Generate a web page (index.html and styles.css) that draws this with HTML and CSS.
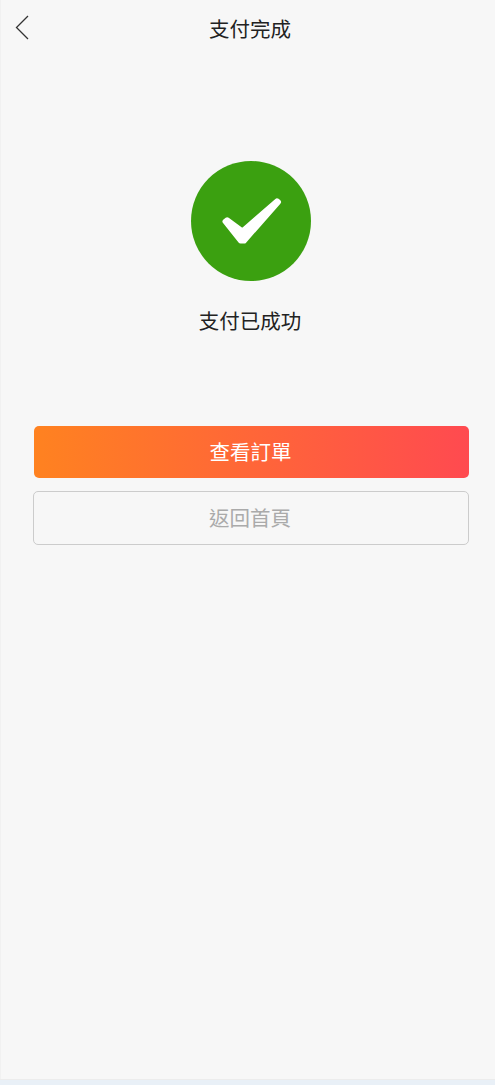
FILE: index.html
```html
<!DOCTYPE html>
<html lang="zh-Hant">
<head>
<meta charset="utf-8">
<title>支付完成</title>
<link rel="stylesheet" href="styles.css">
</head>
<body>
<main class="page">
  <header class="nav">
    <svg class="back" width="14" height="25" viewBox="0 0 14 25"><path d="M13 1 L1.5 12.5 L13 24" fill="none" stroke="#333" stroke-width="1.3"/></svg>
    <h1 class="title">支付完成</h1>
  </header>
  <section class="result">
    <svg class="tick" width="120" height="120" viewBox="0 0 120 120">
      <circle cx="60" cy="60" r="60" fill="#3ba010"/>
      <path d="M34 60.5 L36.2 58.8 L51.5 70 L86 39.8 L87.5 41 L53.2 80 L49.5 80 Z" fill="#fff" stroke="#fff" stroke-width="5" stroke-linejoin="round"/>
    </svg>
    <p class="message">支付已成功</p>
  </section>
  <div class="actions">
    <button class="btn primary">查看訂單</button>
    <button class="btn secondary">返回首頁</button>
  </div>
</main>
<div class="strip"></div>
</body>
</html>
```
FILE: styles.css
```css
* { box-sizing: border-box; }
html, body { margin: 0; padding: 0; height: 100%; }
body {
  display: flex;
  flex-direction: column;
  background: #f7f7f7;
  font-family: "Noto Sans CJK TC", "Noto Sans", sans-serif;
  overflow: hidden;
}
.page { flex: 1; border-left: 1px solid #f1f1f1; }
.nav {
  height: 57px;
  display: flex;
  align-items: center;
  justify-content: center;
  position: relative;
  padding-left: 4px;
}
.back { position: absolute; left: 14px; top: 15px; }
.title { margin: 0; font-size: 20.5px; font-weight: 400; color: #222; line-height: 57px; }
.result {
  display: flex;
  flex-direction: column;
  align-items: center;
  padding: 104px 0 0 6px;
}
.tick { display: block; }
.message { margin: 24px 0 0; padding-right: 2px; font-size: 20.5px; line-height: 30px; color: #222; }
.actions {
  display: flex;
  flex-direction: column;
  gap: 13px;
  margin: 91px 26px 0 32px;
}
.btn {
  display: block;
  width: 100%;
  font: inherit;
  font-size: 20.5px;
  border-radius: 5px;
  padding: 0 2px 2px 0;
}
.primary {
  width: calc(100% - 1px);
  height: 52px;
  margin-left: 1px;
  border: 0;
  color: #fff;
  background: linear-gradient(90deg, #ff8220 0%, #ff4a50 100%);
}
.secondary {
  height: 54px;
  border: 1px solid #ccc;
  color: #aaa;
  background: transparent;
}
.strip { height: 6px; background: #e9f0f7; border-top: 1px solid #ececec; }
```
